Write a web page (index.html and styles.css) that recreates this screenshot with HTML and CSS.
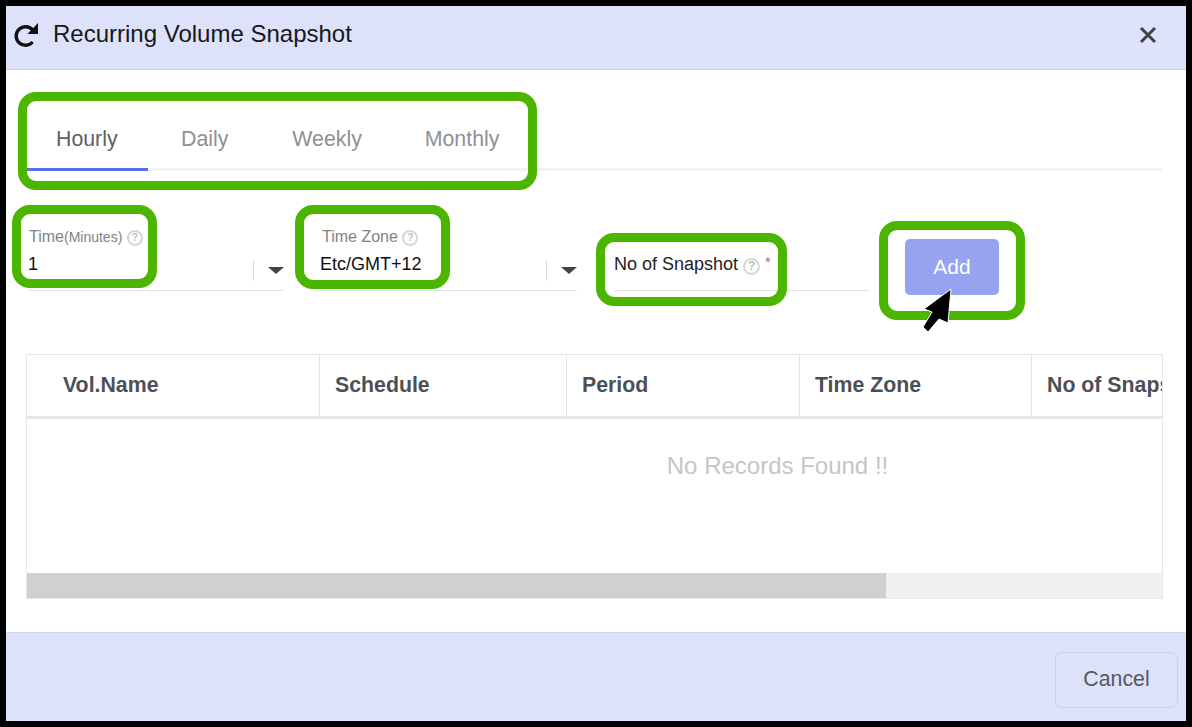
FILE: index.html
```html
<!DOCTYPE html>
<html lang="en">
<head>
    <meta charset="UTF-8">
    <meta name="viewport" content="width=device-width, initial-scale=1.0">
    <title>Recurring Volume Snapshot</title>
    <link rel="stylesheet" href="styles.css">
</head>
<body>
    <div class="modal">
        <div class="modal-header">
            <svg class="refresh-icon" width="26" height="26" viewBox="0 0 26 26">
                <path d="M19.6 20A9.3 9.3 0 1 1 19.6 8" fill="none" stroke="#111" stroke-width="3.4"/>
                <polygon points="25,1 25,12 14.5,12" fill="#111"/>
            </svg>
            <h2 class="modal-title">Recurring Volume Snapshot</h2>
            <svg class="close-icon" width="18" height="18" viewBox="0 0 18 18">
                <path d="M2 2L16 16M16 2L2 16" stroke="#3f4347" stroke-width="3"/>
            </svg>
        </div>

        <div class="modal-body">
            <ul class="tabs">
                <li class="tab active">Hourly</li>
                <li class="tab">Daily</li>
                <li class="tab">Weekly</li>
                <li class="tab tab-last">Monthly</li>
            </ul>

            <form class="form-row">
                <div class="field field-time">
                    <label class="field-label">Time<small>(Minutes)</small> <span class="help">?</span></label>
                    <div class="field-value">1</div>
                    <span class="select-sep"></span>
                    <span class="select-caret"></span>
                </div>
                <div class="field field-zone">
                    <label class="field-label">Time Zone <span class="help">?</span></label>
                    <div class="field-value">Etc/GMT+12</div>
                    <span class="select-sep"></span>
                    <span class="select-caret"></span>
                </div>
                <div class="field field-count">
                    <label class="field-label dark">No of Snapshot <span class="help">?</span> <span class="required">*</span></label>
                </div>
                <button type="button" class="add-btn">Add</button>
            </form>

            <div class="table-box">
                <div class="table-head">
                    <div class="col col-name">Vol.Name</div>
                    <div class="col col-schedule">Schedule</div>
                    <div class="col col-period">Period</div>
                    <div class="col col-zone">Time Zone</div>
                    <div class="col col-count">No of Snapshot</div>
                </div>
                <div class="table-empty">No Records Found !!</div>
                <div class="scrollbar"><div class="scrollbar-thumb"></div></div>
            </div>
        </div>

        <div class="modal-footer">
            <button type="button" class="cancel-btn">Cancel</button>
        </div>
    </div>

    <!-- annotations drawn on top of the screenshot -->
    <div class="mark mark-tabs"></div>
    <div class="mark mark-time"></div>
    <div class="mark mark-zone"></div>
    <div class="mark mark-count"></div>
    <div class="mark mark-add"></div>
    <svg class="cursor" width="36" height="50" viewBox="0 0 36 50">
        <polygon points="31,3 28,37 19,33 8,46 3,41 12,26 4,23" fill="#000" stroke="#fff" stroke-width="1"/>
    </svg>
</body>
</html>
```

FILE: styles.css
```css
html, body {
    height: 100%;
}
body {
    margin: 0;
    padding: 6px;
    box-sizing: border-box;
    background-color: #000;
    font-family: "Liberation Sans", Arial, sans-serif;
    position: relative;
    overflow: hidden;
}
.modal {
    display: flex;
    flex-direction: column;
    height: 100%;
    background-color: #fff;
}
.modal-header {
    display: flex;
    align-items: center;
    padding: 0 29px 8px 7px;
    height: 55px;
    flex-shrink: 0;
    background-color: #dde1fa;
    border-bottom: 1px solid #cfd3ec;
}
.refresh-icon {
    margin-top: 2px;
    margin-right: 14px;
}
.modal-title {
    flex: 1;
    margin: 0;
    font-size: 24px;
    font-weight: normal;
    color: #16181b;
}
.close-icon {
    margin-top: 2px;
}
.modal-body {
    flex: 1;
    padding: 0 23px 0 20px;
}
.tabs {
    display: flex;
    list-style: none;
    margin: 29px 0 0;
    padding: 0;
    height: 72px;
    box-sizing: border-box;
    border-bottom: 3px solid #f2f2f2;
}
.tab {
    padding: 28px 32px 0;
    margin-bottom: -3px;
    font-size: 21.3px;
    color: #8e9092;
    border-bottom: 3px solid transparent;
}
.tab.active {
    width: 122px;
    padding-left: 30px;
    padding-right: 0;
    box-sizing: border-box;
    color: #5c6066;
    border-bottom-color: #5470e8;
}
.tab.active + .tab {
    padding-left: 33px;
}
.tab-last {
    padding-left: 31px;
}
.form-row {
    display: flex;
    height: 183px;
}
.field {
    position: relative;
    width: 257px;
    height: 80px;
    margin-top: 40px;
    border-bottom: 1px solid #e2e2e2;
    box-sizing: border-box;
}
.field-time {
    width: 256px;
    margin-left: 2px;
    margin-right: 36px;
}
.field-zone {
    margin-right: 37px;
}
.field-count {
    width: 255px;
}
.field-label {
    display: block;
    padding-top: 17px;
    font-size: 16px;
    color: #7f8285;
}
.field-label small {
    font-size: 14px;
}
.field-time .field-label {
    padding-left: 1px;
}
.field-zone .field-label {
    padding-left: 2px;
}
.field-label.dark {
    padding-top: 42px;
    font-size: 18px;
    color: #222;
}
.field-value {
    margin-top: 8px;
    font-size: 18px;
    color: #111;
}
.help {
    display: inline-block;
    width: 12px;
    height: 12px;
    line-height: 12px;
    border: 2px solid #d6d6d6;
    border-radius: 50%;
    text-align: center;
    vertical-align: 1px;
    font-size: 10px;
    font-weight: bold;
    color: #bdbdbd;
}
.dark .help {
    width: 13px;
    height: 13px;
    line-height: 13px;
    font-size: 12px;
    vertical-align: 0;
}
.required {
    color: #d9534f;
    font-size: 15px;
    vertical-align: 3px;
}
.select-sep {
    position: absolute;
    right: 30px;
    top: 49px;
    height: 21px;
    border-left: 1px solid #dcdcdc;
}
.select-caret {
    position: absolute;
    right: 0;
    top: 56px;
    border-left: 8px solid transparent;
    border-right: 8px solid transparent;
    border-top: 7px solid #3f4347;
}
.add-btn {
    width: 94px;
    height: 56px;
    margin-top: 68px;
    margin-left: 36px;
    background-color: #95a3f0;
    color: #fff;
    border: none;
    border-radius: 5px;
    font-family: inherit;
    font-size: 21px;
}
.table-box {
    position: relative;
    height: 245px;
    border: 1px solid #e6e6e6;
    box-sizing: border-box;
    overflow: hidden;
}
.table-head {
    display: flex;
    height: 64px;
    border-bottom: 3px solid #e6e6e6;
    box-sizing: border-box;
    white-space: nowrap;
}
.col {
    flex-shrink: 0;
    padding-left: 15px;
    line-height: 60px;
    font-size: 21.3px;
    font-weight: bold;
    color: #4c5055;
    border-right: 1px solid #e6e6e6;
    box-sizing: border-box;
}
.col-name {
    width: 293px;
    padding-left: 36px;
}
.col-schedule {
    width: 247px;
}
.col-period {
    width: 233px;
}
.col-zone {
    width: 232px;
}
.col-count {
    width: 250px;
    border-right: none;
}
.table-empty {
    margin-top: 33px;
    padding-left: 366px;
    text-align: center;
    font-size: 24px;
    color: #c4c6c8;
}
.scrollbar {
    position: absolute;
    left: 0;
    right: 0;
    bottom: 0;
    height: 25px;
    background-color: #f0f0f0;
}
.scrollbar-thumb {
    width: 859px;
    height: 100%;
    background-color: #d0d0d0;
}
.modal-footer {
    display: flex;
    justify-content: flex-end;
    align-items: flex-start;
    height: 89px;
    flex-shrink: 0;
    padding: 19px 8px 0 0;
    box-sizing: border-box;
    background-color: #dde1fa;
    border-top: 1px solid #cfd3ec;
}
.cancel-btn {
    width: 123px;
    height: 56px;
    padding-bottom: 3px;
    background: transparent;
    border: 1px solid #ccd0e4;
    border-radius: 7px;
    font-family: inherit;
    font-size: 21.3px;
    color: #55595e;
}
.mark {
    position: absolute;
    border: 9px solid #4cb500;
    border-radius: 18px;
    box-sizing: border-box;
}
.mark-tabs {
    left: 18px;
    top: 92px;
    width: 519px;
    height: 98px;
}
.mark-time {
    left: 12px;
    top: 205px;
    width: 145px;
    height: 83px;
}
.mark-zone {
    left: 295px;
    top: 205px;
    width: 155px;
    height: 84px;
}
.mark-count {
    left: 596px;
    top: 233px;
    width: 191px;
    height: 73px;
}
.mark-add {
    left: 879px;
    top: 221px;
    width: 146px;
    height: 99px;
}
.cursor {
    position: absolute;
    left: 920px;
    top: 286px;
}
```
